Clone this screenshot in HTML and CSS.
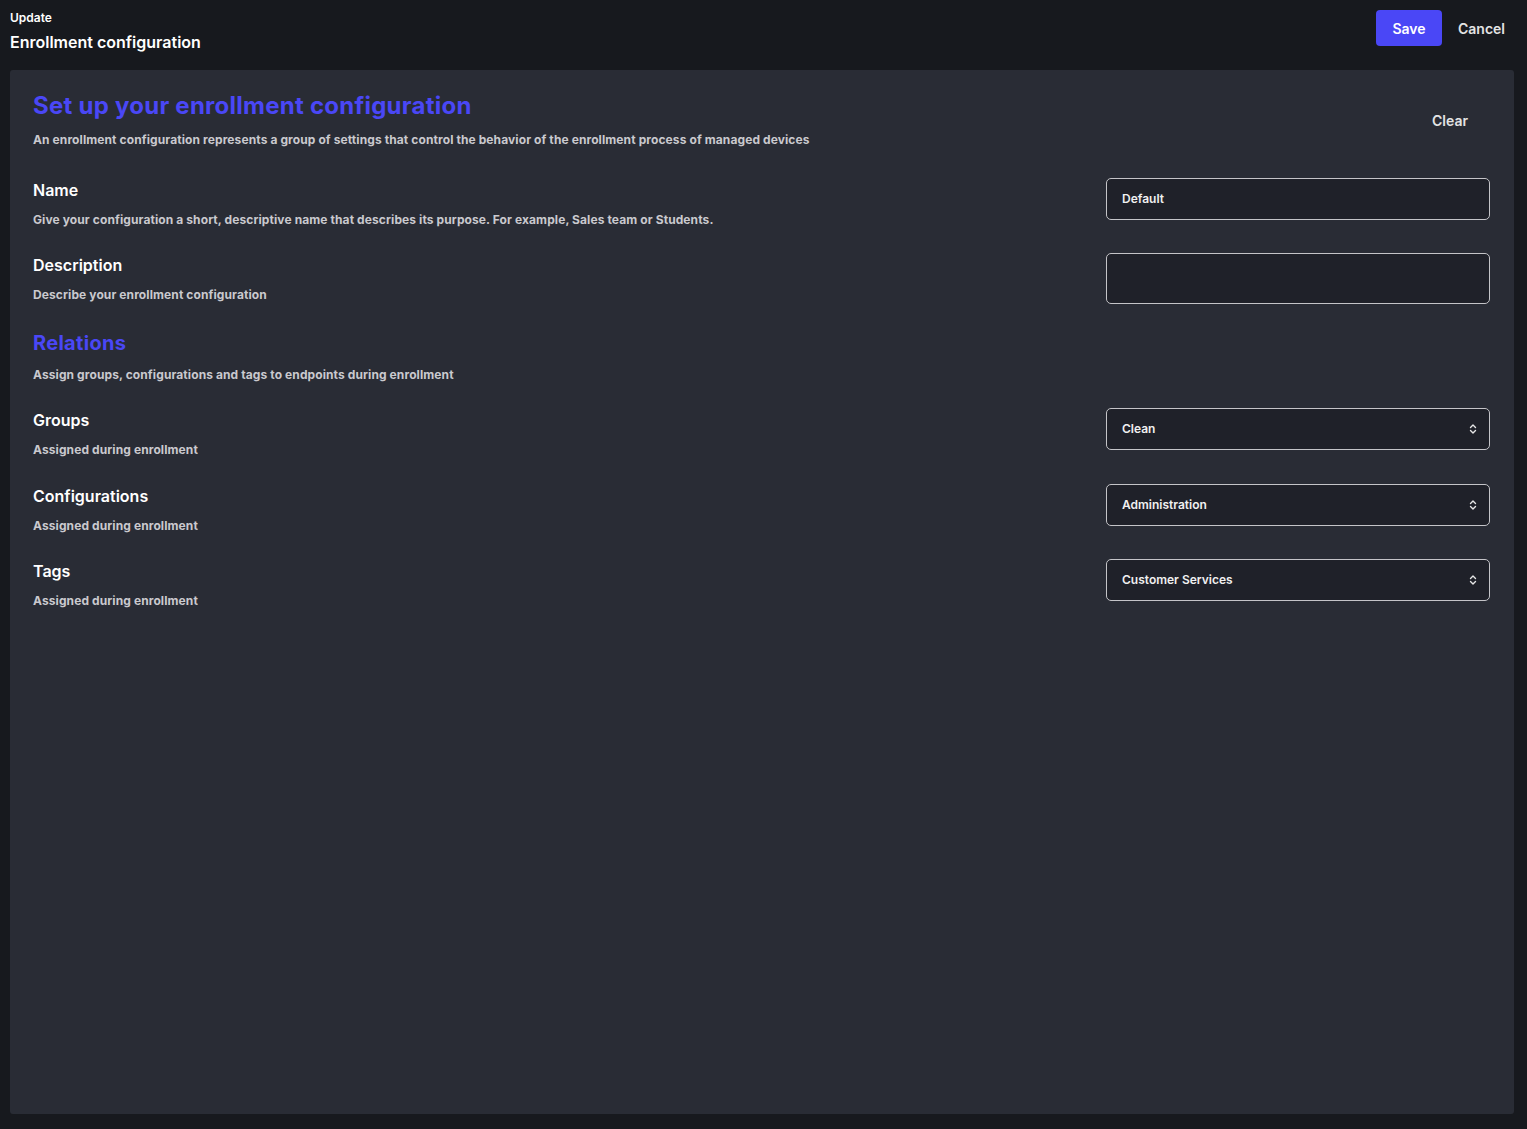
FILE: index.html
```html
<!DOCTYPE html>
<html lang="en">
<head>
    <meta charset="UTF-8">
    <meta name="viewport" content="width=device-width, initial-scale=1.0">
    <title>Enrollment configuration</title>
    <link rel="stylesheet" href="styles.css">
</head>
<body>
    <header class="topbar">
        <div class="topbar-title">
            <div class="crumb">Update</div>
            <h1>Enrollment configuration</h1>
        </div>
        <div class="topbar-actions">
            <button class="btn-primary">Save</button>
            <button class="btn-plain">Cancel</button>
        </div>
    </header>

    <main class="panel">
        <div class="panel-head">
            <div>
                <h2>Set up your enrollment configuration</h2>
                <p class="hint">An enrollment configuration represents a group of settings that control the behavior of the enrollment process of managed devices</p>
            </div>
            <button class="btn-plain btn-clear">Clear</button>
        </div>

        <div class="field">
            <div class="field-text">
                <h3>Name</h3>
                <p class="hint">Give your configuration a short, descriptive name that describes its purpose. For example, Sales team or Students.</p>
            </div>
            <div class="control">Default</div>
        </div>

        <div class="field">
            <div class="field-text">
                <h3>Description</h3>
                <p class="hint">Describe your enrollment configuration</p>
            </div>
            <div class="control control-tall"></div>
        </div>

        <div class="section">
            <h2 class="section-title">Relations</h2>
            <p class="hint">Assign groups, configurations and tags to endpoints during enrollment</p>
        </div>

        <div class="field field-wide">
            <div class="field-text">
                <h3>Groups</h3>
                <p class="hint">Assigned during enrollment</p>
            </div>
            <div class="control select">
                <span>Clean</span>
                <svg width="8" height="12" viewBox="0 0 8 12"><path d="M1.5 4.5L4 2l2.5 2.5M1.5 7.5L4 10l2.5-2.5" fill="none" stroke="#e6e6e6" stroke-width="1.4" stroke-linecap="round" stroke-linejoin="round"/></svg>
            </div>
        </div>

        <div class="field">
            <div class="field-text">
                <h3>Configurations</h3>
                <p class="hint">Assigned during enrollment</p>
            </div>
            <div class="control select">
                <span>Administration</span>
                <svg width="8" height="12" viewBox="0 0 8 12"><path d="M1.5 4.5L4 2l2.5 2.5M1.5 7.5L4 10l2.5-2.5" fill="none" stroke="#e6e6e6" stroke-width="1.4" stroke-linecap="round" stroke-linejoin="round"/></svg>
            </div>
        </div>

        <div class="field">
            <div class="field-text">
                <h3>Tags</h3>
                <p class="hint">Assigned during enrollment</p>
            </div>
            <div class="control select">
                <span>Customer Services</span>
                <svg width="8" height="12" viewBox="0 0 8 12"><path d="M1.5 4.5L4 2l2.5 2.5M1.5 7.5L4 10l2.5-2.5" fill="none" stroke="#e6e6e6" stroke-width="1.4" stroke-linecap="round" stroke-linejoin="round"/></svg>
            </div>
        </div>
    </main>
</body>
</html>
```

FILE: styles.css
```css
*{
    box-sizing: border-box;
    font-family: Inter, "Noto Sans", sans-serif;
}
body{
    margin: 0;
    height: 1129px;
    display: flex;
    flex-direction: column;
    background-color: #17191e;
    color: #ffffff;
}
h1, h2, h3, p{
    margin: 0;
}
button{
    border: none;
    background: none;
    cursor: pointer;
}

/* top bar */
.topbar{
    height: 70px;
    display: flex;
    justify-content: space-between;
    align-items: flex-start;
    padding: 10px 6px 0 10px;
    flex-shrink: 0;
}
.crumb{
    font-size: 12px;
    line-height: 16px;
    font-weight: 600;
}
.topbar-title h1{
    margin-top: 6px;
    font-size: 16px;
    line-height: 20px;
    font-weight: 600;
}
.topbar-actions{
    display: flex;
    align-items: center;
}
.btn-primary{
    width: 66px;
    height: 36px;
    border-radius: 4px;
    background-color: #4a47f6;
    color: #ffffff;
    font-size: 14px;
    font-weight: 600;
}
.btn-plain{
    height: 36px;
    padding: 0 16px;
    color: #e4e4e4;
    font-size: 14px;
    font-weight: 600;
}

/* main panel */
.panel{
    flex: 1;
    margin: 0 13px 15px 10px;
    padding: 20px 24px 0 23px;
    background-color: #292c35;
    border-radius: 3px;
}
.panel-head{
    display: flex;
    justify-content: space-between;
    align-items: center;
    margin-bottom: 30px;
}
.panel-head h2{
    color: #4a47f6;
    font-size: 24px;
    line-height: 32px;
    font-weight: 700;
    letter-spacing: 0.25px;
}
.btn-clear{
    margin-top: 2px;
    padding: 0 22px;
}
.hint{
    margin-top: 10px;
    font-size: 12px;
    line-height: 16px;
    font-weight: 700;
    letter-spacing: 0.1px;
    color: #c9c9ce;
}

.field{
    display: flex;
    justify-content: space-between;
    align-items: flex-start;
    margin-bottom: 25px;
}
.field-wide{
    margin-bottom: 26px;
}
.field h3{
    font-size: 16px;
    line-height: 24px;
    font-weight: 600;
}
.control{
    width: 384px;
    height: 42px;
    display: flex;
    align-items: center;
    justify-content: space-between;
    padding: 0 12px 1px 15px;
    background-color: #1f2129;
    border: 1px solid #c4c4c8;
    border-radius: 5px;
    font-size: 12px;
    font-weight: 600;
    color: #f0f0f0;
}
.control-tall{
    height: 51px;
}

.section{
    margin: 1px 0 25px;
}
.section-title{
    color: #4a47f6;
    font-size: 20px;
    line-height: 28px;
    font-weight: 700;
    letter-spacing: 0.3px;
}
```
